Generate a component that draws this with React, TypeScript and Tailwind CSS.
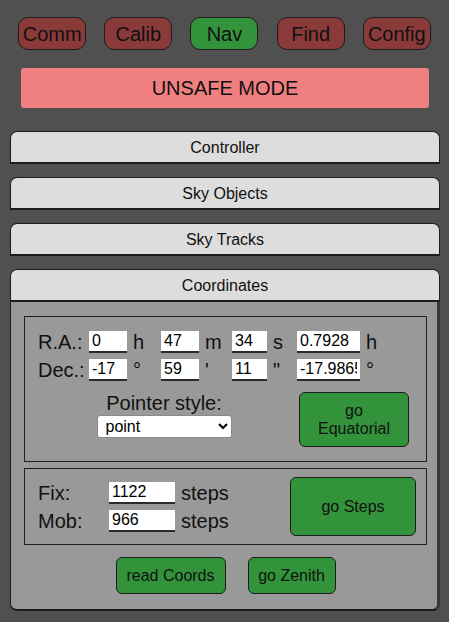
import { useState } from "react";

const tabs = ["Comm", "Calib", "Nav", "Find", "Config"];
const closedPanels = ["Controller", "Sky Objects", "Sky Tracks"];

function Field({ value, width }: { value: string; width: string }) {
  return (
    <input
      readOnly
      value={value}
      className={`${width} h-[22px] border-0 border-b-2 border-[#2a2a2a] bg-white px-[3px] text-[16px] text-black outline-none`}
    />
  );
}

function PanelHeader({ title }: { title: string }) {
  return (
    <button className="h-[33px] w-full rounded-t-[7px] border border-b-2 border-[#1c1c1c] bg-[#dddddd] pt-[1px] text-[16px] text-[#111]">
      {title}
    </button>
  );
}

export default function App() {
  const [pointer, setPointer] = useState("point");

  return (
    <div className="min-h-[622px] bg-[#505050] font-['Liberation_Sans',Arial,sans-serif] text-[#111]">
      <div className="flex justify-evenly pt-[17px]">
        {tabs.map((tab) => (
          <button
            key={tab}
            className={`h-[33px] w-[68px] rounded-[10px] border border-[#1c1c1c] text-[20px] leading-none text-[#111] ${
              tab === "Nav" ? "bg-[#33933a]" : "bg-[#8b3a3a]"
            }`}
          >
            {tab}
          </button>
        ))}
      </div>

      <div className="mt-[18px] ml-[21px] mr-[20px] flex h-[40px] items-center justify-center rounded-[3px] bg-[#f08080] text-[20px]">
        UNSAFE MODE
      </div>

      <div className="mt-[23px] flex flex-col gap-[13px] pl-[10px] pr-[9px]">
        {closedPanels.map((p) => (
          <PanelHeader key={p} title={p} />
        ))}

        <div>
          <PanelHeader title="Coordinates" />
          <div className="rounded-b-[7px] border-l border-r-[3px] border-b-2 border-l-[#1c1c1c] border-r-[#383838] border-b-[#1c1c1c] bg-[#999999] pl-[13px] pr-[10px] pt-[14px] pb-[15px]">
            <div className="border border-[#222] px-[13px] pt-[11px] pb-[14px] text-[20px]">
              <div className="flex h-[28px] items-center">
                <span className="w-[51px]">R.A.:</span>
                <Field value="0" width="w-[38px]" />
                <span className="w-[34px] pl-[6px]">h</span>
                <Field value="47" width="w-[38px]" />
                <span className="w-[33px] pl-[6px]">m</span>
                <Field value="34" width="w-[35px]" />
                <span className="w-[30px] pl-[6px]">s</span>
                <Field value="0.7928" width="w-[63px]" />
                <span className="pl-[6px]">h</span>
              </div>
              <div className="flex h-[28px] items-center">
                <span className="w-[51px]">Dec.:</span>
                <Field value="-17" width="w-[38px]" />
                <span className="w-[34px] pl-[6px]">°</span>
                <Field value="59" width="w-[38px]" />
                <span className="w-[33px] pl-[6px]">'</span>
                <Field value="11" width="w-[35px]" />
                <span className="w-[30px] pl-[6px]">"</span>
                <Field value="-17.9865" width="w-[63px]" />
                <span className="pl-[6px]">°</span>
              </div>

              <div className="mt-[8px] flex items-start">
                <div className="flex w-[252px] flex-col items-center">
                  <span className="leading-[23px]">Pointer style:</span>
                  <select
                    value={pointer}
                    onChange={(e) => setPointer(e.target.value)}
                    className="h-[23px] w-[135px] rounded-[3px] border border-[#8a8a8a] bg-white pl-[4px] text-[16px] text-black"
                  >
                    <option value="point">point</option>
                    <option value="cross">cross</option>
                    <option value="circle">circle</option>
                  </select>
                </div>
                <button className="ml-[9px] h-[55px] w-[110px] rounded-[6px] border border-[#1c1c1c] bg-[#33933a] text-[16px] leading-[18px] text-[#111]">
                  go
                  <br />
                  Equatorial
                </button>
              </div>
            </div>

            <div className="mt-[6px] flex items-center border border-[#222] py-[8px] pl-[13px] pr-[10px] text-[20px]">
              <div>
                <div className="flex h-[28px] items-center">
                  <span className="w-[71px]">Fix:</span>
                  <Field value="1122" width="w-[66px]" />
                  <span className="ml-[6px]">steps</span>
                </div>
                <div className="flex h-[28px] items-center">
                  <span className="w-[71px]">Mob:</span>
                  <Field value="966" width="w-[66px]" />
                  <span className="ml-[6px]">steps</span>
                </div>
              </div>
              <button className="ml-auto h-[59px] w-[126px] rounded-[6px] border border-[#1c1c1c] bg-[#33933a] text-[16px] text-[#111]">
                go Steps
              </button>
            </div>

            <div className="mt-[12px] flex justify-center gap-[22px]">
              <button className="h-[37px] w-[110px] rounded-[6px] border border-[#1c1c1c] bg-[#33933a] text-[16px] text-[#111]">
                read Coords
              </button>
              <button className="h-[37px] w-[88px] rounded-[6px] border border-[#1c1c1c] bg-[#33933a] text-[16px] text-[#111]">
                go Zenith
              </button>
            </div>
          </div>
        </div>
      </div>
    </div>
  );
}
